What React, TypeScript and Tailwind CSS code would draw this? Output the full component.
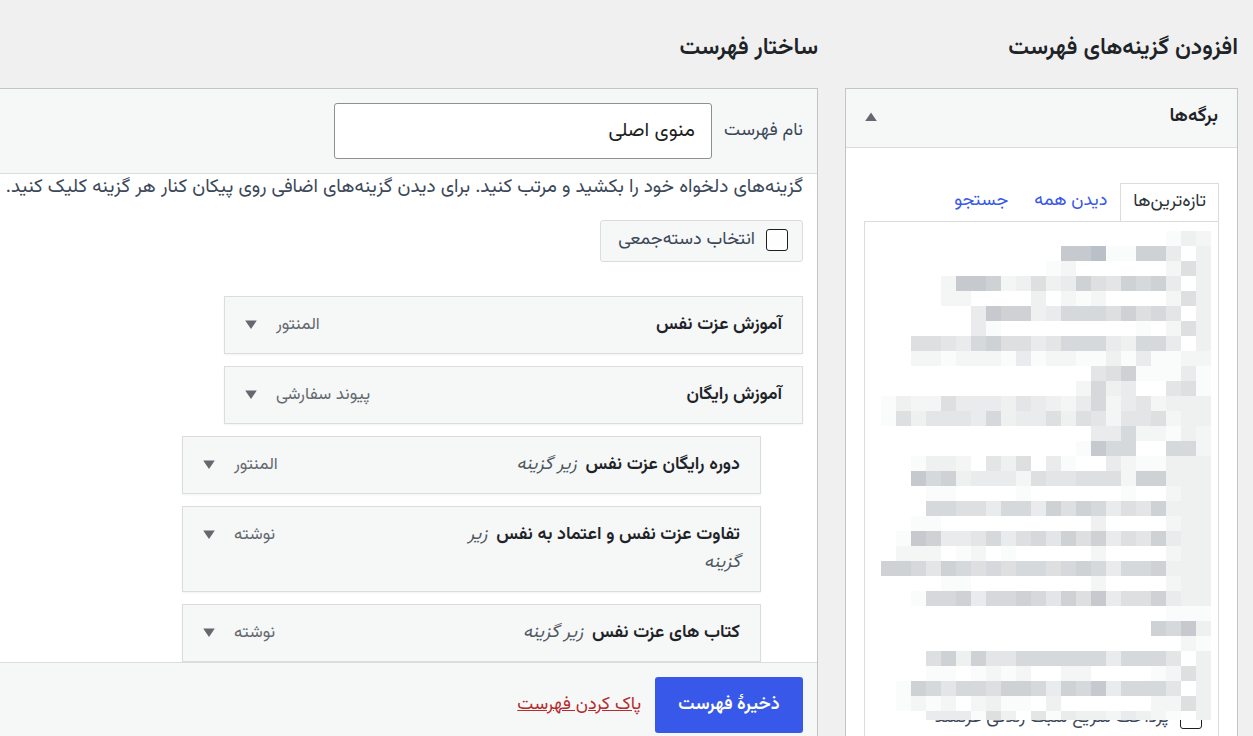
import { useState } from "react";

interface MenuItem {
  title: string;
  type: string;
  isSub?: boolean;
}

const MENU_ITEMS: MenuItem[] = [
  { title: "آموزش عزت نفس", type: "المنتور" },
  { title: "آموزش رایگان", type: "پیوند سفارشی" },
  { title: "دوره رایگان عزت نفس", type: "المنتور", isSub: true },
  { title: "تفاوت عزت نفس و اعتماد به نفس", type: "نوشته", isSub: true },
  { title: "کتاب های عزت نفس", type: "نوشته", isSub: true },
];

const TABS = ["تازه‌ترین‌ها", "دیدن همه", "جستجو"];

// Redacted page names: one character per block, darker with a higher digit
const MOSAIC = [
  "...................132",
  "............99a11884.3",
  "...........12......263",
  "....2998236348658784.3",
  "....22....3.212....263",
  "......49883477768675.3",
  "......41.........1.263",
  "..665478664577743774.3",
  "..22122214122113141122",
  "..............56811141",
  ".............2734..561",
  "1322644435432472452333",
  "1635554734463652556233",
  "..............44722132",
  ".............1977..772",
  "..1332.536.41..4211333",
  "..97834442655666288333",
  "...11....1......1..233",
  "...7766477486874658333",
  "..11..........3....233",
  ".198445746758684658433",
  ".222.12.1.....2....233",
  "8875876767767874778333",
  "....11........2....233",
  "..17784778758694668433",
  "...................111",
  "..................8793",
  "....................21",
  "...68385577777747775.3",
  "...11.1212..22....1263",
  ".1875776887487947775.3",
  ".1212.2311.3......2263",
  "...444163.5143324321.3",
];

const SHADES: Record<string, string> = {
  ".": "#ffffff",
  "1": "#fafbfb",
  "2": "#f4f6f6",
  "3": "#eff0f0",
  "4": "#e9ebec",
  "5": "#e3e5e7",
  "6": "#dddfe1",
  "7": "#d6d9dc",
  "8": "#ced2d5",
  "9": "#c6cacf",
  a: "#b9c0c8",
};

function Mosaic() {
  return (
    <svg
      width="330"
      height="489"
      viewBox="0 0 330 489"
      shapeRendering="crispEdges"
      aria-hidden="true"
      className="absolute top-[9px] right-[7px]"
    >
      {MOSAIC.map((row, y) =>
        row.split("").map((level, x) => (
          <rect key={`${x}-${y}`} x={x * 15} y={y * 15} width="15" height="15" fill={SHADES[level]} />
        ))
      )}
    </svg>
  );
}

function Triangle({ up }: { up?: boolean }) {
  return (
    <svg width="12" height="10" viewBox="0 0 12 10" className="block fill-[#646970]" aria-hidden="true">
      <path d={up ? "M6 0.5 L11.8 9 H0.2 Z" : "M0.2 0.5 H11.8 L6 9 Z"} />
    </svg>
  );
}

function PagesPanel() {
  const [tab, setTab] = useState(TABS[0]);

  return (
    <section className="flex w-[393px] shrink-0 flex-col">
      <h2 className="h-[88px] pt-[33px] text-[23px] leading-[30px] font-semibold whitespace-nowrap text-[#1d2327]">
        افزودن گزینه‌های فهرست
      </h2>
      <div className="flex min-h-0 flex-1 flex-col border border-b-0 border-[#c3c4c7] bg-white">
        <div className="flex h-[59px] shrink-0 items-center justify-between border-b border-[#dcdcde] bg-[#f6f7f7] px-[19px] pb-0.5">
          <h3 className="text-[19px] leading-7 font-semibold text-[#1d2327]">برگه‌ها</h3>
          <button type="button" aria-label="بستن برگه‌ها">
            <Triangle up />
          </button>
        </div>
        <div className="flex min-h-0 flex-1 flex-col px-[18px] pt-[35px]">
          <div className="flex h-[38px] shrink-0" role="tablist">
            {TABS.map((name) => (
              <button
                key={name}
                type="button"
                role="tab"
                aria-selected={tab === name}
                onClick={() => setTab(name)}
                className={
                  tab === name
                    ? "border border-b-0 border-[#dcdcde] bg-white px-3 pb-0.5 text-lg leading-7 text-[#2c3338]"
                    : "px-[13px] pb-0.5 text-lg leading-7 text-[#3858e9]"
                }
              >
                {name}
              </button>
            ))}
          </div>
          <div className="relative flex min-h-0 flex-1 flex-col justify-end border border-b-0 border-[#dcdcde] pr-4 pb-1">
            <label className="flex items-center gap-[11px] text-lg leading-7 whitespace-nowrap text-[#3c4858]">
              <input
                type="checkbox"
                className="size-[22px] appearance-none rounded-[3px] border border-[#1e1e1e] bg-white"
              />
              پرداخت سریع سبک زندگی عزتمند
            </label>
            <Mosaic />
          </div>
        </div>
      </div>
    </section>
  );
}

function MenuRow({ item }: { item: MenuItem }) {
  return (
    <li
      className={
        item.isSub
          ? "mr-[42px] flex w-[579px] justify-between border border-[#dcdcde] bg-[#f6f7f7] px-5 py-[14px] shadow-xs"
          : "flex w-[579px] justify-between border border-[#dcdcde] bg-[#f6f7f7] px-5 py-[14px] shadow-xs"
      }
    >
      <div className="w-[290px] text-lg leading-7">
        <span className="font-semibold text-[#1d2327]">{item.title}</span>{" "}
        {item.isSub && <span className="mr-1 text-[#50575e] italic">زیر گزینه</span>}
      </div>
      <div className="flex h-7 items-center gap-[19px]">
        <span className="text-[17px] leading-7 whitespace-nowrap text-[#646970]">{item.type}</span>
        <button type="button" aria-label={`ویرایش ${item.title}`}>
          <Triangle />
        </button>
      </div>
    </li>
  );
}

function StructurePanel() {
  const [menuName, setMenuName] = useState("منوی اصلی");

  return (
    <section className="flex min-w-0 flex-1 flex-col">
      <h2 className="h-[88px] pt-[33px] text-[23px] leading-[30px] font-semibold text-[#1d2327]">ساختار فهرست</h2>
      <div className="flex min-h-0 flex-1 flex-col border-t border-r border-[#c3c4c7] bg-white">
        <div className="flex h-[85px] shrink-0 items-center gap-[11px] border-b border-[#dcdcde] bg-[#f6f7f7] pr-[14px]">
          <label htmlFor="menu-name" className="w-20 text-lg leading-7 whitespace-nowrap text-[#3c4858]">
            نام فهرست
          </label>
          <input
            id="menu-name"
            type="text"
            value={menuName}
            onChange={(e) => setMenuName(e.target.value)}
            className="h-14 w-[378px] rounded-[3px] border border-[#8c8f94] bg-white px-4 text-xl text-[#1e1e1e] outline-none"
          />
        </div>
        <div className="min-h-0 flex-1 overflow-hidden pr-[14px]">
          <p className="text-[19px] leading-7 whitespace-nowrap text-[#3c4858]">
            گزینه‌های دلخواه خود را بکشید و مرتب کنید. برای دیدن گزینه‌های اضافی روی پیکان کنار هر گزینه کلیک کنید.
          </p>
          <label className="mt-[18px] flex h-[42px] w-[203px] items-center gap-[11px] rounded-[3px] border border-[#dcdcde] bg-[#f6f7f7] pr-[14px] pb-[3px] text-lg leading-7 whitespace-nowrap text-[#3c4858]">
            <input
              type="checkbox"
              className="size-[22px] appearance-none rounded-[3px] border border-[#1e1e1e] bg-white"
            />
            انتخاب دسته‌جمعی
          </label>
          <ul className="flex flex-col gap-3 pt-[34px]">
            {MENU_ITEMS.map((item) => (
              <MenuRow key={item.title} item={item} />
            ))}
          </ul>
        </div>
        <div className="flex shrink-0 items-center gap-[14px] border-t border-[#dcdcde] bg-[#f6f7f7] pt-[14px] pr-[14px] pb-[3px]">
          <button
            type="button"
            className="h-14 w-[148px] rounded-[3px] bg-[#3858e9] text-lg leading-7 font-semibold whitespace-nowrap text-white"
          >
            ذخیرهٔ فهرست
          </button>
          <a href="#delete" className="text-lg leading-7 whitespace-nowrap text-[#b32d2e] underline">
            پاک کردن فهرست
          </a>
        </div>
      </div>
    </section>
  );
}

export default function App() {
  return (
    <main
      dir="rtl"
      className="flex h-screen gap-[27px] overflow-hidden bg-[#f0f0f0] pr-[15px] font-['Vazirmatn','Noto_Sans_Arabic','DejaVu_Sans',sans-serif]"
    >
      <PagesPanel />
      <StructurePanel />
    </main>
  );
}
